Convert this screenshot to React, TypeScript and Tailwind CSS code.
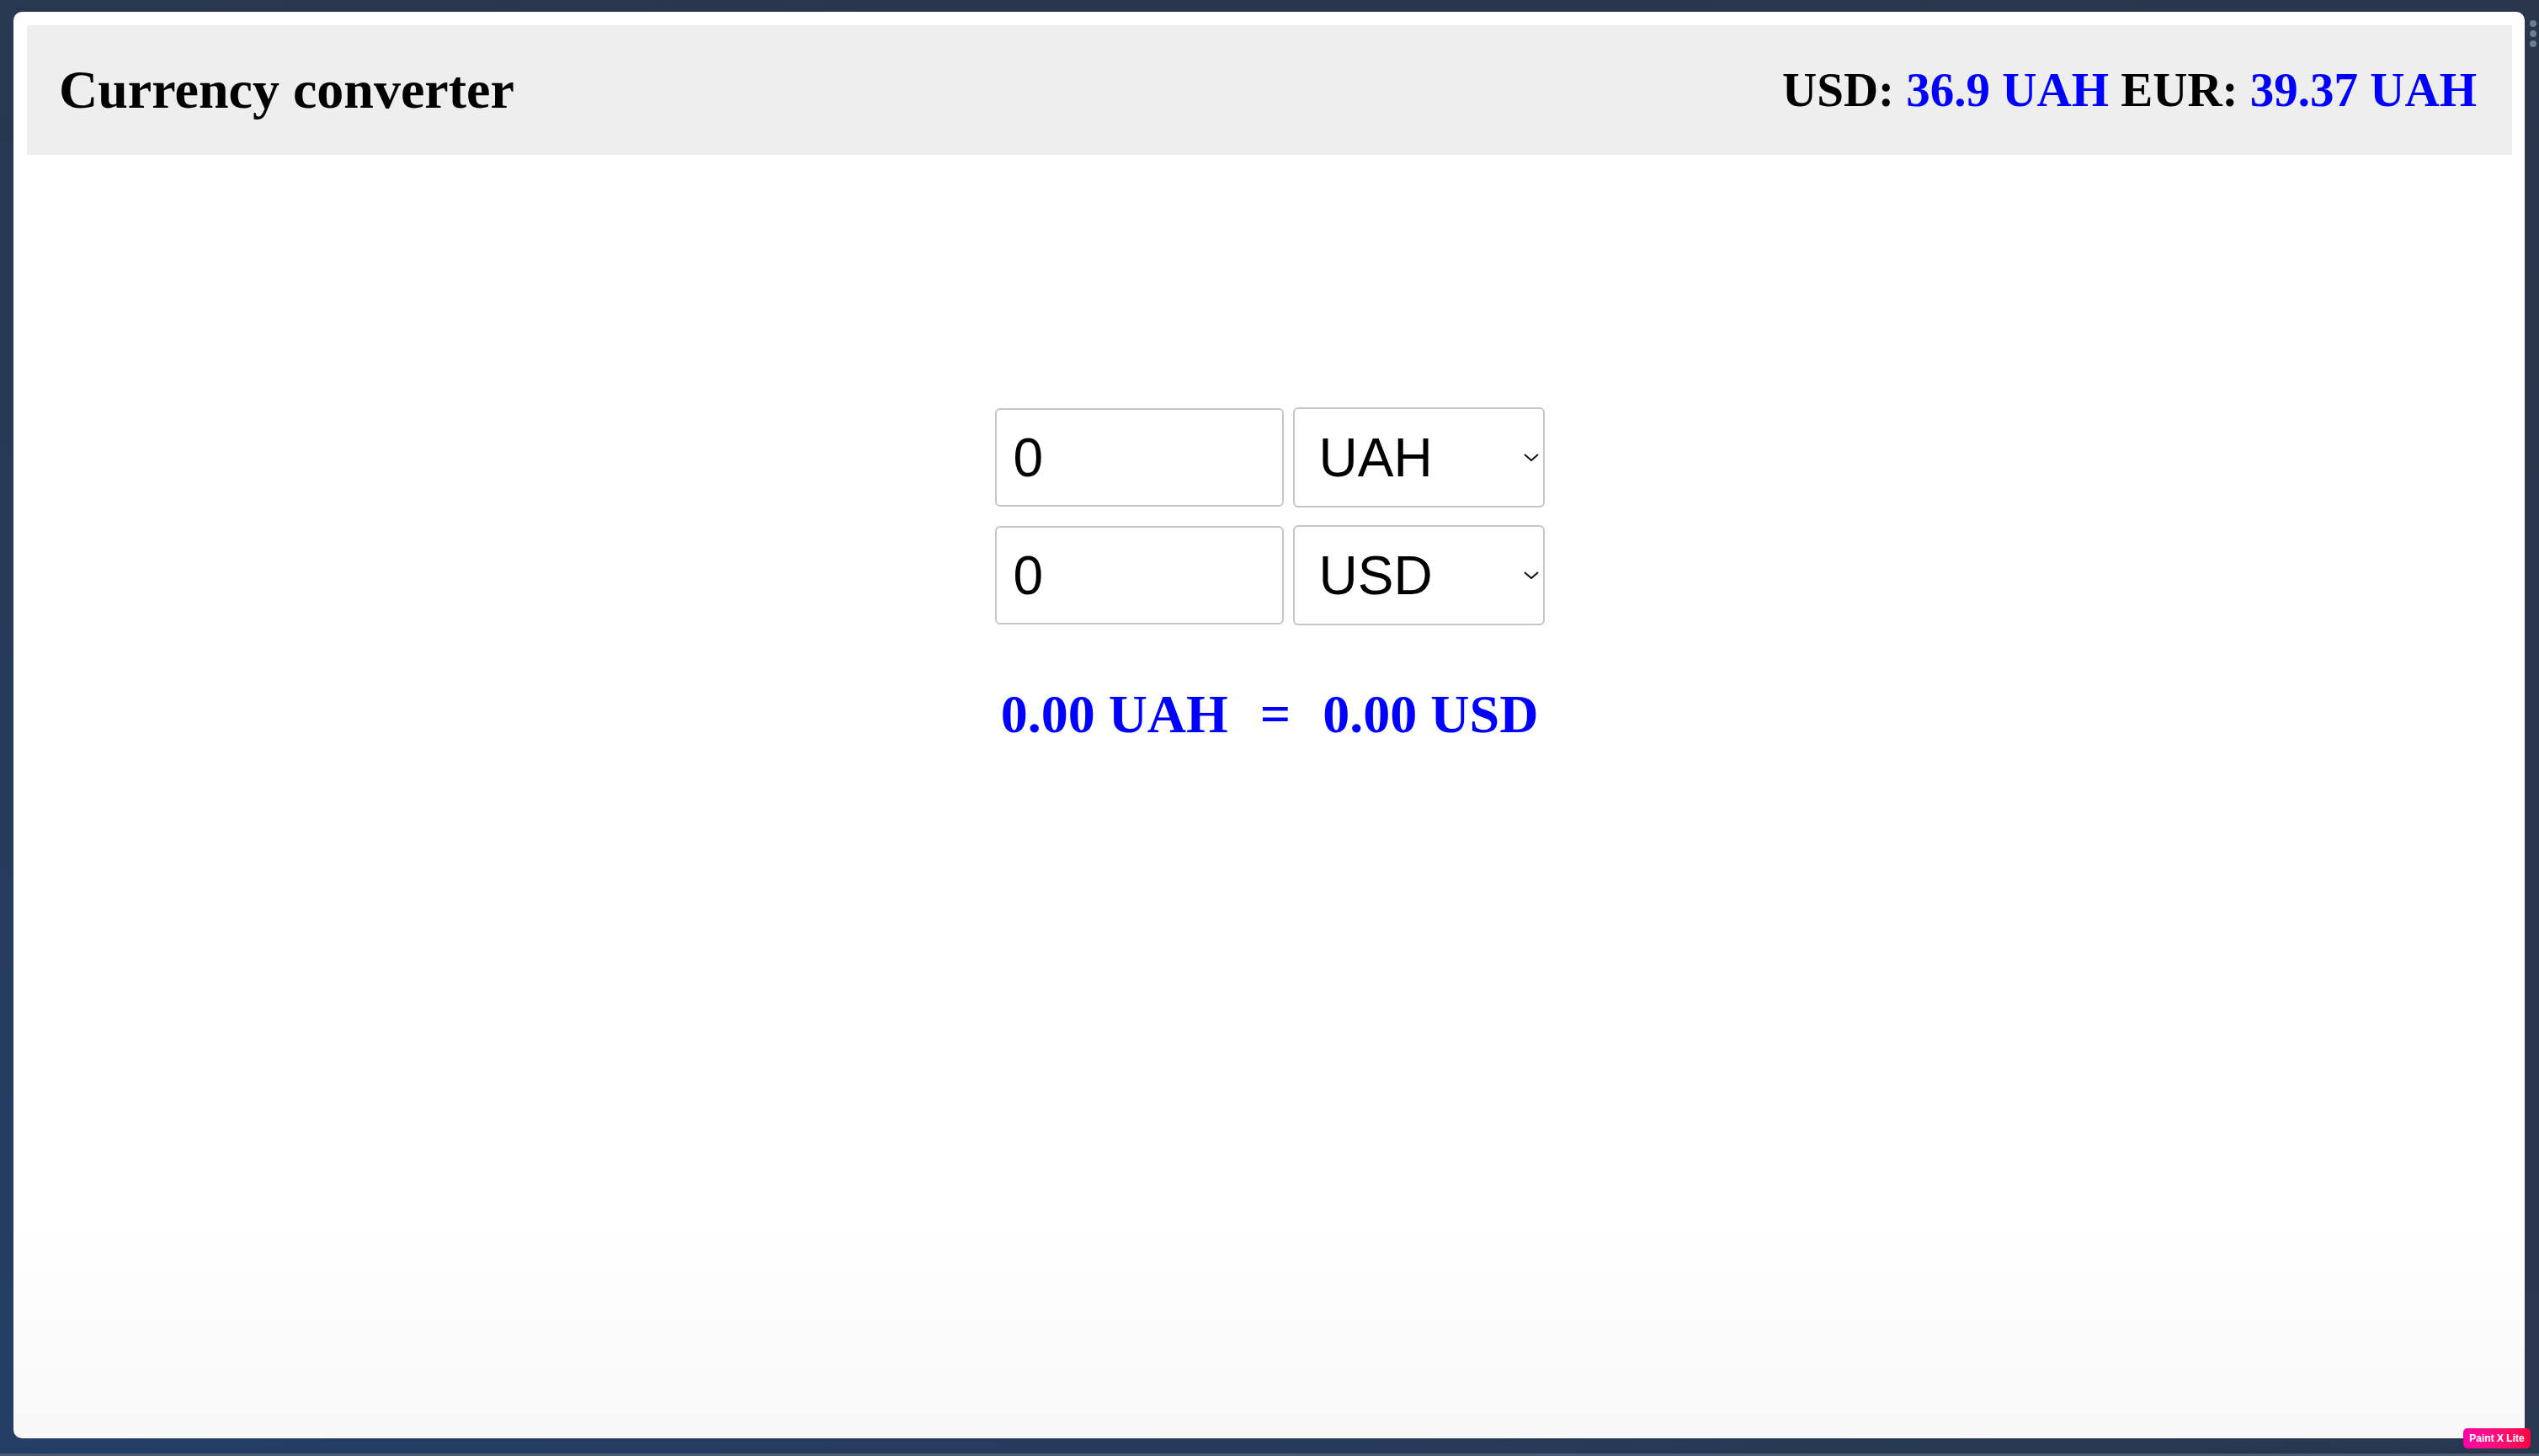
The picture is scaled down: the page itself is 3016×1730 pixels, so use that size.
import { useState } from "react"

const serif = { fontFamily: '"Liberation Serif", "Times New Roman", serif' }
const sans = { fontFamily: '"Liberation Sans", Arial, sans-serif' }

function Chevron() {
  return (
    <svg width="18" height="9" viewBox="0 0 18 9" fill="none">
      <path d="M1 1 L9 8 L17 1" stroke="#111" strokeWidth="2" />
    </svg>
  )
}

function Row({ amount, currency }: { amount: string; currency: string }) {
  return (
    <div className="flex items-center gap-[11px]">
      <input
        defaultValue={amount}
        className="w-[343px] h-[117px] border-2 border-[#c6c6c6] rounded-[6px] px-[20px] text-[64px] text-black outline-none"
        style={sans}
      />
      <div
        className="w-[299px] h-[119px] border-2 border-[#c6c6c6] rounded-[6px] pl-[29px] pr-[5px] flex items-center justify-between text-[64px] text-black"
        style={sans}
      >
        <span>{currency}</span>
        <Chevron />
      </div>
    </div>
  )
}

export default function App() {
  const [from] = useState("UAH")
  const [to] = useState("USD")

  return (
    <div className="relative w-[3016px] h-[1730px] overflow-hidden bg-gradient-to-tr from-[#243e66] via-[#29374f] to-[#29364c] pt-[14px] pl-[16px] pr-[17px] pb-[21px]">
      {/* window */}
      <div className="h-full rounded-[10px] bg-gradient-to-b from-white from-85% to-[#f8f8f8] pt-[16px] pl-[16px] pr-[15px] flex flex-col">
        <header className="h-[154px] bg-[#eeeeee] flex items-center justify-between pl-[38px] pr-[42px]">
          <h1 className="text-[64px] font-bold text-black" style={serif}>
            Currency converter
          </h1>
          <div className="text-[57px] font-bold text-black" style={serif}>
            USD: <span className="text-[#0000ff]">36.9 UAH</span> EUR:{" "}
            <span className="text-[#0000ff]">39.37 UAH</span>
          </div>
        </header>

        <main className="flex flex-col items-center pt-[300px]">
          <div className="flex flex-col gap-[21px]">
            <Row amount="0" currency={from} />
            <Row amount="0" currency={to} />
          </div>
          <div
            className="mt-[58px] flex items-center gap-[38px] text-[64px] font-bold text-[#0000ff]"
            style={serif}
          >
            <span>0.00 {from}</span>
            <span>=</span>
            <span>0.00 {to}</span>
          </div>
        </main>
      </div>

      {/* scrollbar dots */}
      <div className="absolute left-[3005px] top-[24px] flex flex-col gap-[4px]">
        <div className="w-[8px] h-[8px] rounded-full bg-[#6d7b90]" />
        <div className="w-[8px] h-[8px] rounded-full bg-[#6d7b90]" />
        <div className="w-[8px] h-[8px] rounded-full bg-[#6d7b90]" />
      </div>

      <div className="absolute left-0 right-0 bottom-0 h-[3px] bg-[#4b5a6e]" />

      {/* badge */}
      <div
        className="absolute left-[2926px] top-[1697px] w-[80px] h-[24px] rounded-[5px] bg-gradient-to-r from-[#ff00a8] to-[#ff0040] flex items-center justify-center text-[12px] font-bold text-white"
        style={sans}
      >
        Paint X Lite
      </div>
    </div>
  )
}
